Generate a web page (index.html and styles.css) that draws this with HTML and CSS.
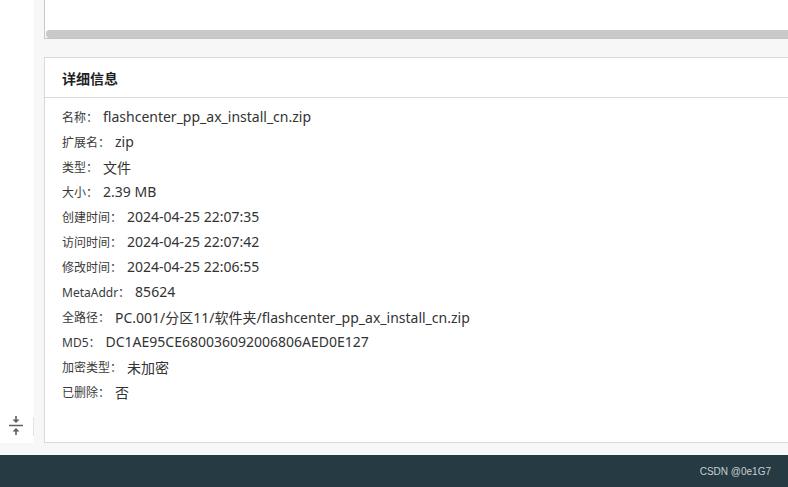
FILE: index.html
```html
<!DOCTYPE html>
<html lang="zh-CN">
<head>
<meta charset="utf-8">
<title>详细信息</title>
<link rel="stylesheet" href="styles.css">
</head>
<body>
<div class="main">
  <aside class="sidebar">
    <div class="sidebar-tools">
      <svg class="collapse-icon" width="14" height="20" viewBox="0 0 14 20" aria-hidden="true">
        <line x1="0" y1="9.5" x2="14" y2="9.5" stroke="#5f5f5f" stroke-width="1.5"/>
        <line x1="7" y1="0" x2="7" y2="6" stroke="#5f5f5f" stroke-width="1.6"/>
        <path d="M3.5 3.5 L7 7 L10.5 3.5 Z" fill="#5f5f5f"/>
        <line x1="7" y1="13" x2="7" y2="19" stroke="#5f5f5f" stroke-width="1.6"/>
        <path d="M3.5 15.5 L7 12 L10.5 15.5 Z" fill="#5f5f5f"/>
      </svg>
      <span class="tool-divider"></span>
    </div>
  </aside>
  <section class="content">
    <div class="top-panel">
      <div class="top-body"></div>
      <div class="scrollbar"><div class="thumb"></div></div>
    </div>
    <div class="card">
      <div class="card-header">详细信息</div>
      <div class="card-body">
        <div class="row"><span class="label">名称：</span><span class="value">flashcenter_pp_ax_install_cn.zip</span></div>
        <div class="row"><span class="label">扩展名：</span><span class="value">zip</span></div>
        <div class="row"><span class="label">类型：</span><span class="value">文件</span></div>
        <div class="row"><span class="label">大小：</span><span class="value">2.39 MB</span></div>
        <div class="row"><span class="label">创建时间：</span><span class="value">2024-04-25 22:07:35</span></div>
        <div class="row"><span class="label">访问时间：</span><span class="value">2024-04-25 22:07:42</span></div>
        <div class="row"><span class="label">修改时间：</span><span class="value">2024-04-25 22:06:55</span></div>
        <div class="row"><span class="label">MetaAddr：</span><span class="value">85624</span></div>
        <div class="row"><span class="label">全路径：</span><span class="value">PC.001/分区11/软件夹/flashcenter_pp_ax_install_cn.zip</span></div>
        <div class="row"><span class="label">MD5：</span><span class="value">DC1AE95CE680036092006806AED0E127</span></div>
        <div class="row"><span class="label">加密类型：</span><span class="value">未加密</span></div>
        <div class="row"><span class="label">已删除：</span><span class="value">否</span></div>
      </div>
    </div>
  </section>
</div>
<footer class="footer"><span class="credit">CSDN @0e1G7</span></footer>
</body>
</html>
```

FILE: styles.css
```css
* { box-sizing: border-box; }
html, body { margin: 0; padding: 0; }
body {
  width: 788px;
  height: 487px;
  overflow: hidden;
  background: #f7f7f7;
  font-family: "Noto Sans", "Noto Sans CJK SC", sans-serif;
  color: #333;
}
.main {
  display: flex;
  height: 455px;
}
.sidebar {
  width: 34px;
  height: 443px;
  background: #fff;
  display: flex;
  flex-direction: column;
  justify-content: flex-end;
  flex-shrink: 0;
}
.sidebar-tools {
  display: flex;
  align-items: center;
  height: 20px;
  margin-bottom: 7px;
}
.collapse-icon {
  margin-left: 9px;
  display: block;
}
.tool-divider {
  width: 1px;
  height: 19px;
  background: #e3e3e3;
  margin-left: 10px;
}
.content {
  flex: 1;
  margin-left: 10px;
  display: flex;
  flex-direction: column;
  min-width: 0;
}
.top-panel {
  height: 39px;
  background: #fff;
  border-left: 1px solid #c3cad0;
  border-bottom: 1px solid #bcc6cd;
  display: flex;
  flex-direction: column;
  flex-shrink: 0;
}
.top-body { height: 30px; }
.scrollbar {
  height: 8px;
  padding-left: 1px;
  background: #f7f7f7;
}
.thumb {
  height: 8px;
  background: #c9c9c9;
  border-radius: 4px 0 0 4px;
}
.card {
  flex: 1;
  margin-top: 18px;
  margin-bottom: 12px;
  background: #fff;
  border: 1px solid #d9d9d9;
  border-right: none;
  display: flex;
  flex-direction: column;
}
.card-header {
  height: 40px;
  padding-left: 17px;
  border-bottom: 1px solid #d9d9d9;
  display: flex;
  align-items: center;
  font-size: 14px;
  font-weight: 700;
  color: #1f1f1f;
}
.card-body {
  padding: 6px 0 0 17px;
}
.row {
  height: 25px;
  display: flex;
  align-items: center;
  white-space: nowrap;
}
.label {
  font-size: 12px;
  color: #3a3a3a;
}
.value {
  font-size: 14px;
  margin-left: 5px;
  color: #333;
}
.footer {
  height: 32px;
  background: #253a42;
  display: flex;
  align-items: center;
  justify-content: flex-end;
  padding-right: 17px;
}
.credit {
  font-family: "Liberation Sans", Arial, sans-serif;
  font-size: 10px;
  color: #c9cfd2;
}
```
